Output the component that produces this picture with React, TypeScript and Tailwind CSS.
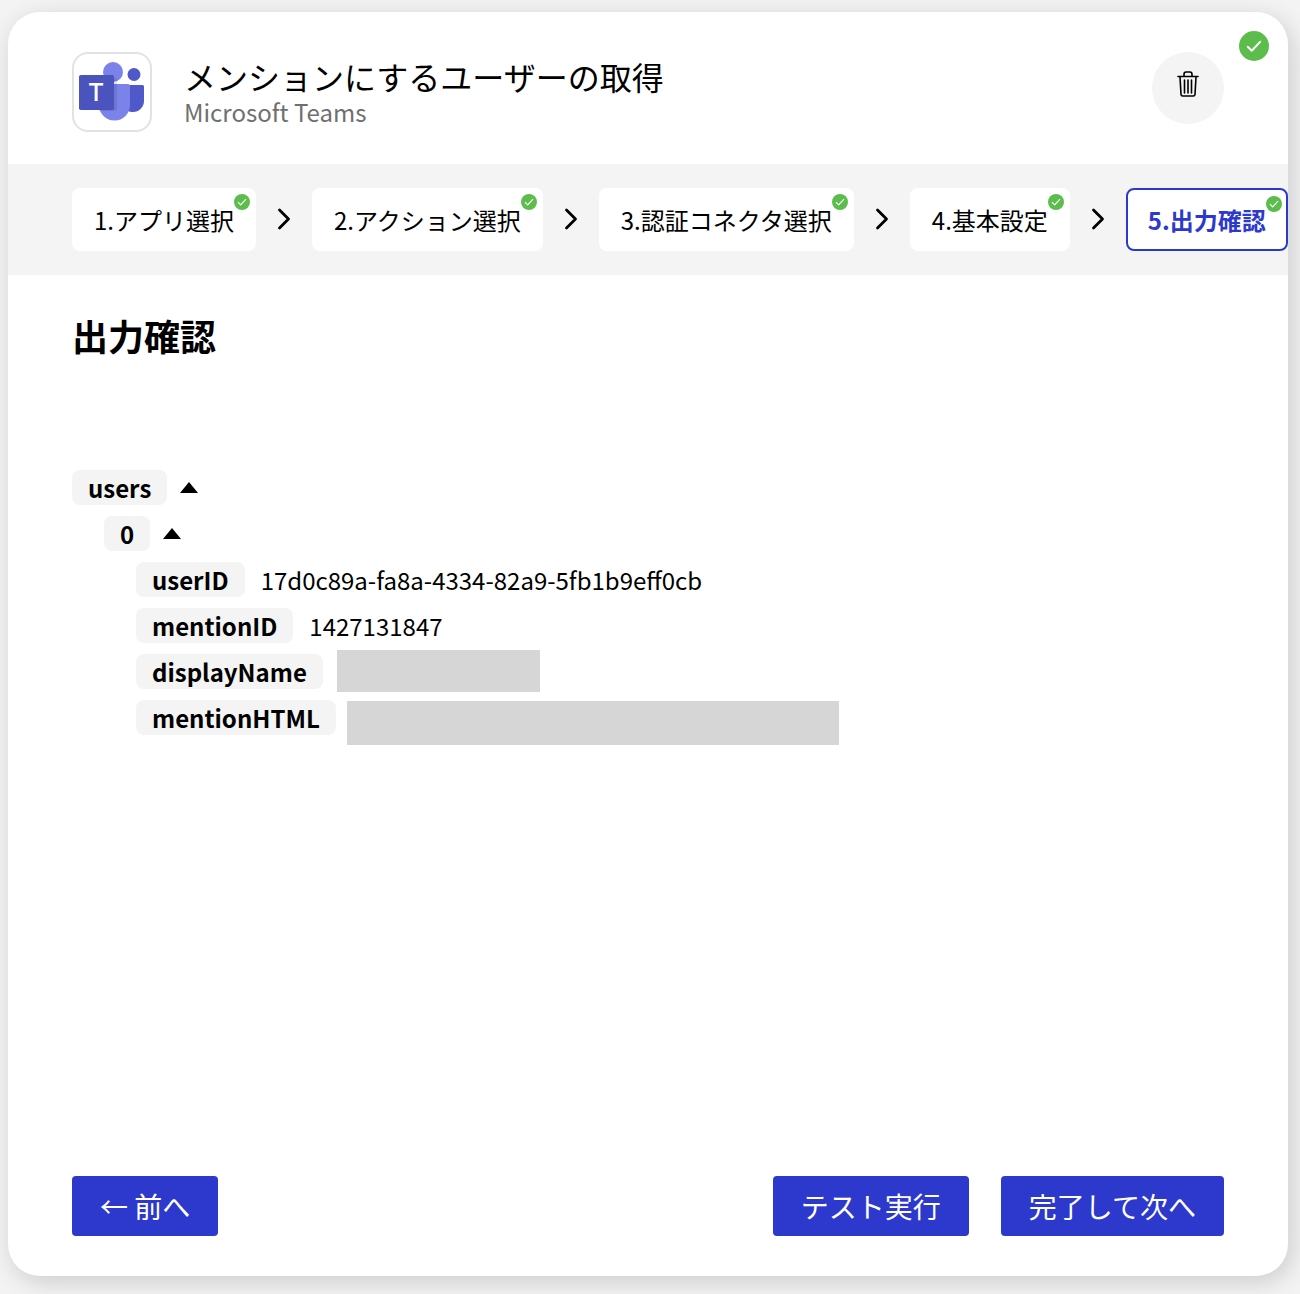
const FONT = "font-['Noto_Sans_CJK_JP','Noto_Sans',sans-serif]";

function CheckBadge({ big, active }: { big?: boolean; active?: boolean }) {
  if (big) {
    return (
      <span className="absolute right-[19px] top-[19px] flex h-[30px] w-[30px] items-center justify-center rounded-full bg-[#5cbd4c]">
        <svg viewBox="0 0 16 16" className="h-[20px] w-[20px]" fill="none" stroke="#fff" strokeWidth="1.5" strokeLinecap="round" strokeLinejoin="round">
          <path d="M3 8.6l3.2 3.2L13 4.6" />
        </svg>
      </span>
    );
  }
  return (
    <span className={`absolute top-[6px] flex h-4 w-4 items-center justify-center rounded-full bg-[#5cbd4c] ${active ? "right-[4px]" : "right-[6px]"}`}>
      <svg viewBox="0 0 16 16" className="h-[12px] w-[12px]" fill="none" stroke="#fff" strokeWidth="1.5" strokeLinecap="round" strokeLinejoin="round">
        <path d="M3 8.6l3.2 3.2L13 4.6" />
      </svg>
    </span>
  );
}

function TeamsLogo() {
  return (
    <svg viewBox="0 0 76 76" className="h-[76px] w-[76px]">
      <circle cx="60" cy="20.500" r="6.500" fill="#5059c9" />
      <path d="M50 31h18.500a1.500 1.500 0 0 1 1.500 1.500V47a11 11 0 0 1-11 11h-1a11 11 0 0 1-8-3z" fill="#5059c9" />
      <circle cx="39" cy="18" r="10" fill="#7b83eb" />
      <path d="M25 30h29a2 2 0 0 1 2 2v19a15.500 15.500 0 0 1-31 0z" fill="#7b83eb" />
      <path d="M25 24h15a3 3 0 0 1 3 3v27a3 3 0 0 1-3 3H25z" fill="#000" opacity="0.1" />
      <rect x="5" y="21" width="35" height="35" rx="1.800" fill="#4b53bc" />
      <text x="22" y="47" fontSize="26" fontWeight="500" textAnchor="middle" fill="#fff" fontFamily="'Noto Sans', sans-serif">T</text>
    </svg>
  );
}

function TrashIcon() {
  return (
    <svg viewBox="0 0 22 26" className="mb-2 h-[26px] w-[22px]" fill="none" stroke="#000" strokeWidth="1.600" strokeLinecap="round" strokeLinejoin="round">
      <path d="M1 5.500h20" />
      <path d="M7 5V3.500C7 2 8 1 9 1h4c1 0 2 1 2 2.500V5" />
      <path d="M3 6l1 17.500c.1 1 .8 1.500 1.700 1.500h10.600c.9 0 1.600-.5 1.700-1.500L19 6" />
      <path d="M7.500 9v13M11 9v13M14.500 9v13" />
    </svg>
  );
}

function Chevron() {
  return (
    <span className="flex w-14 shrink-0 justify-center pb-[2px]">
      <svg viewBox="0 0 14 22" className="h-[22px] w-[14px]" fill="none" stroke="#000" strokeWidth="2.800" strokeLinecap="round" strokeLinejoin="round">
        <path d="M2.500 2l9 9-9 9" />
      </svg>
    </span>
  );
}

const steps = ["1.アプリ選択", "2.アクション選択", "3.認証コネクタ選択", "4.基本設定", "5.出力確認"];

function Row({ label, value, caret, indent, mask }: { label: string; value?: string; caret?: boolean; indent: string; mask?: string }) {
  return (
    <div className={`flex h-[35px] items-center ${indent}`}>
      <span className="flex h-[35px] items-center rounded-lg bg-[#f4f4f4] px-4 text-2xl font-bold leading-none text-black">{label}</span>
      {caret && <span className="ml-[13px] h-0 w-0 border-x-[9px] border-b-[11px] border-x-transparent border-b-black" />}
      {value && <span className="ml-4 text-2xl leading-none text-black">{value}</span>}
      {mask && <div className={mask} />}
    </div>
  );
}

export default function App() {
  return (
    <div className={`h-[1294px] bg-[#f3f3f3] pb-[18px] pl-2 pr-3 pt-3 ${FONT}`}>
      <div className="relative flex h-full flex-col overflow-hidden rounded-[32px] bg-white shadow-[4px_6px_24px_rgba(0,0,0,0.16)]">
        <CheckBadge big />
        {/* Header */}
        <div className="flex h-[152px] shrink-0 items-start justify-between px-16 pt-10">
          <div className="flex items-start gap-8">
            <div className="flex h-20 w-20 items-center justify-center rounded-2xl border-2 border-[#e2e2e2]">
              <TeamsLogo />
            </div>
            <div className="flex flex-col pt-[2px]">
              <span className="text-[32px] leading-[44px] text-black">メンションにするユーザーの取得</span>
              <span className="text-2xl leading-7 text-[#6f6f6f]">Microsoft Teams</span>
            </div>
          </div>
          <button className="flex h-[72px] w-[72px] items-center justify-center rounded-full bg-[#f4f4f4]">
            <TrashIcon />
          </button>
        </div>

        {/* Steps */}
        <div className="flex h-[111px] shrink-0 items-center bg-[#f4f4f4] pl-16">
          {steps.map((s, i) => (
            <div key={s} className="flex items-center">
              <div
                className={
                  i === 4
                    ? "relative flex h-[63px] items-center rounded-lg border-2 border-[#2d38cd] bg-white px-5 text-2xl font-bold text-[#2d38cd]"
                    : "relative flex h-[63px] items-center rounded-lg bg-white px-[22px] text-2xl text-black"
                }
              >
                <span>{s}</span>
                <CheckBadge active={i === 4} />
              </div>
              {i < 4 && <Chevron />}
            </div>
          ))}
        </div>

        {/* Content */}
        <div className="flex flex-1 flex-col justify-between px-16 pb-10 pt-[33px]">
          <div>
            <h2 className="text-4xl leading-[54px] font-bold text-black">出力確認</h2>
            <div className="mt-[108px] flex flex-col gap-[11px]">
              <Row label="users" caret indent="" />
              <Row label="0" caret indent="ml-8" />
              <Row label="userID" value="17d0c89a-fa8a-4334-82a9-5fb1b9eff0cb" indent="ml-16" />
              <Row label="mentionID" value="1427131847" indent="ml-16" />
              <Row label="displayName" indent="ml-16" mask="mb-[1px] ml-[14px] h-[42px] w-[203px] bg-[#d6d6d6]" />
              <Row label="mentionHTML" indent="ml-16" mask="ml-[11px] mt-[11px] h-[44px] w-[492px] bg-[#d6d6d6]" />
            </div>
          </div>
          <div className="flex items-center justify-between">
            <button className="h-[60px] rounded bg-[#2d38cd] px-7 text-[28px] text-white">← 前へ</button>
            <div className="flex gap-8">
              <button className="h-[60px] rounded-sm bg-[#2d38cd] px-7 text-[28px] text-white">テスト実行</button>
              <button className="h-[60px] rounded-sm bg-[#2d38cd] px-7 text-[28px] text-white">完了して次へ</button>
            </div>
          </div>
        </div>
      </div>
    </div>
  );
}
